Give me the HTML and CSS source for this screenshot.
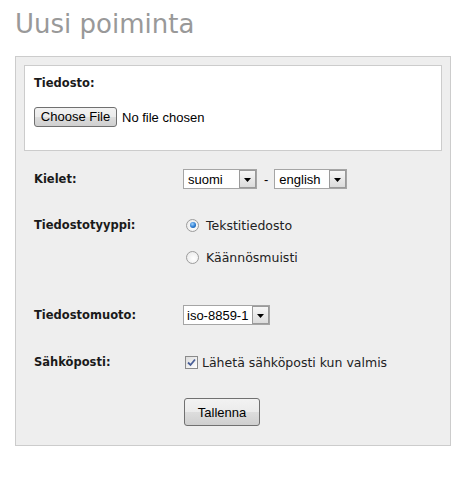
FILE: index.html
```html
<!DOCTYPE html>
<html lang="fi">
<head>
<meta charset="utf-8">
<title>Uusi poiminta</title>
<link rel="stylesheet" href="styles.css">
</head>
<body>
<h1 class="title">Uusi poiminta</h1>
<form class="panel">
  <div class="filebox">
    <div class="label">Tiedosto:</div>
    <div class="file-line">
      <button type="button" class="btn btn-file">Choose File</button>
      <span class="file-status">No file chosen</span>
    </div>
  </div>

  <div class="rows">
    <div class="row row-lang">
      <div class="label">Kielet:</div>
      <div class="value">
        <span class="select sel-suomi"><span class="sel-text">suomi</span><span class="sel-arrow"><svg width="7" height="4" viewBox="0 0 7 4"><path d="M0 0H7L3.5 4Z" fill="#000"/></svg></span></span>
        <span class="dash">-</span>
        <span class="select sel-english"><span class="sel-text">english</span><span class="sel-arrow"><svg width="7" height="4" viewBox="0 0 7 4"><path d="M0 0H7L3.5 4Z" fill="#000"/></svg></span></span>
      </div>
    </div>

    <div class="row row-type">
      <div class="label">Tiedostotyyppi:</div>
      <div class="value options">
        <label class="option"><span class="radio checked"></span><span>Tekstitiedosto</span></label>
        <label class="option"><span class="radio"></span><span>Käännösmuisti</span></label>
      </div>
    </div>

    <div class="row row-format">
      <div class="label">Tiedostomuoto:</div>
      <div class="value">
        <span class="select sel-iso"><span class="sel-text">iso-8859-1</span><span class="sel-arrow"><svg width="7" height="4" viewBox="0 0 7 4"><path d="M0 0H7L3.5 4Z" fill="#000"/></svg></span></span>
      </div>
    </div>

    <div class="row row-mail">
      <div class="label">Sähköposti:</div>
      <div class="value">
        <label class="option"><span class="checkbox"><svg width="9" height="9" viewBox="0 0 9 9"><path d="M1 4.5L3.5 7L8 1.5" fill="none" stroke="#4a5f97" stroke-width="1.8"/></svg></span><span>Lähetä sähköposti kun valmis</span></label>
      </div>
    </div>

    <div class="row row-save">
      <div class="label"></div>
      <div class="value">
        <button type="button" class="btn btn-save">Tallenna</button>
      </div>
    </div>
  </div>
</form>
</body>
</html>
```

FILE: styles.css
```css
html, body {
  margin: 0;
  padding: 0;
  background: #fff;
}
body {
  padding: 0 15px;
  font-family: "DejaVu Sans", Verdana, sans-serif;
  color: #222;
}
.title {
  margin: 9px 0 0 0;
  font-size: 26px;
  line-height: 30px;
  font-weight: normal;
  color: #999;
}
.panel {
  margin-top: 17px;
  width: 418px;
  height: 372px;
  padding: 8px;
  background: #eee;
  border: 1px solid #ccc;
}
.filebox {
  background: #fff;
  border: 1px solid #ccc;
  padding: 10px 9px 23px 9px;
}
.label {
  font-size: 11.5px;
  line-height: 15px;
  font-weight: bold;
  color: #1a1a1a;
}
.file-line {
  margin-top: 16px;
  display: flex;
  align-items: center;
  height: 20px;
}
.btn {
  font-family: "Liberation Sans", Arial, sans-serif;
  font-size: 13px;
  color: #000;
  border: 1px solid #707070;
  border-radius: 3px;
  background: linear-gradient(#f2f2f2 0%, #ebebeb 50%, #dddddd 51%, #cfcfcf 100%);
  padding: 0;
  margin: 0;
}
.btn-file {
  width: 83px;
  height: 20px;
  line-height: 16px;
}
.file-status {
  margin-left: 5px;
  font-family: "Liberation Sans", Arial, sans-serif;
  font-size: 13px;
  color: #000;
}
.rows {
  padding-left: 10px;
}
.row {
  display: flex;
  align-items: center;
  margin-top: 26px;
}
.row .label {
  width: 149px;
  flex: none;
}
.row-lang {
  margin-top: 18px;
  height: 20px;
}
.row-type {
  align-items: flex-start;
}
.row-type .label {
  line-height: 20px;
}
.row-format {
  margin-top: 38px;
  height: 20px;
}
.row-mail {
  margin-top: 27px;
  height: 20px;
}
.row-save {
  margin-top: 26px;
}
.value {
  display: flex;
  align-items: center;
}
.options {
  flex-direction: column;
  align-items: flex-start;
  gap: 12px;
}
.option {
  display: flex;
  align-items: center;
  height: 20px;
  font-size: 12.5px;
  color: #222;
}
.select {
  display: inline-flex;
  align-items: center;
  justify-content: space-between;
  box-sizing: border-box;
  height: 20px;
  border: 1px solid #a5a5a5;
  background: #fff;
  font-family: "Liberation Sans", Arial, sans-serif;
  font-size: 13px;
  color: #000;
  padding-left: 4px;
}
.sel-suomi { width: 74px; }
.sel-english { width: 73px; }
.sel-iso { width: 87px; padding-left: 3px; }
.sel-arrow {
  box-sizing: border-box;
  width: 17px;
  height: 18px;
  border: 1px solid #9a9a9a;
  background: linear-gradient(#f6f6f6, #dcdcdc);
  display: flex;
  align-items: center;
  justify-content: center;
  margin-right: 0;
}
.sel-arrow svg { display: block; margin-top: 1px; }
.dash {
  font-family: "Liberation Sans", Arial, sans-serif;
  font-size: 13px;
  color: #000;
  margin: 0 6px 0 7px;
}
.radio {
  box-sizing: border-box;
  width: 13px;
  height: 13px;
  border-radius: 50%;
  border: 1px solid #9c9c9c;
  background: radial-gradient(circle at 60% 60%, #ffffff 0%, #e6e6e6 100%);
  margin: 0 7px 0 3px;
  position: relative;
  flex: none;
}
.radio.checked::after {
  content: "";
  position: absolute;
  left: 2.5px;
  top: 2.5px;
  width: 6px;
  height: 6px;
  border-radius: 50%;
  background: radial-gradient(circle at 40% 35%, #9fd3ff 0%, #2a7ad0 55%, #144d8c 100%);
}
.checkbox {
  box-sizing: border-box;
  width: 13px;
  height: 13px;
  border: 1px solid #8a8a8a;
  background: linear-gradient(135deg, #dcdcdc, #ffffff);
  margin: 0 4px 0 2px;
  display: flex;
  align-items: center;
  justify-content: center;
  flex: none;
}
.checkbox svg { display: block; }
.btn-save {
  margin-left: 1px;
  width: 76px;
  height: 28px;
}
```
